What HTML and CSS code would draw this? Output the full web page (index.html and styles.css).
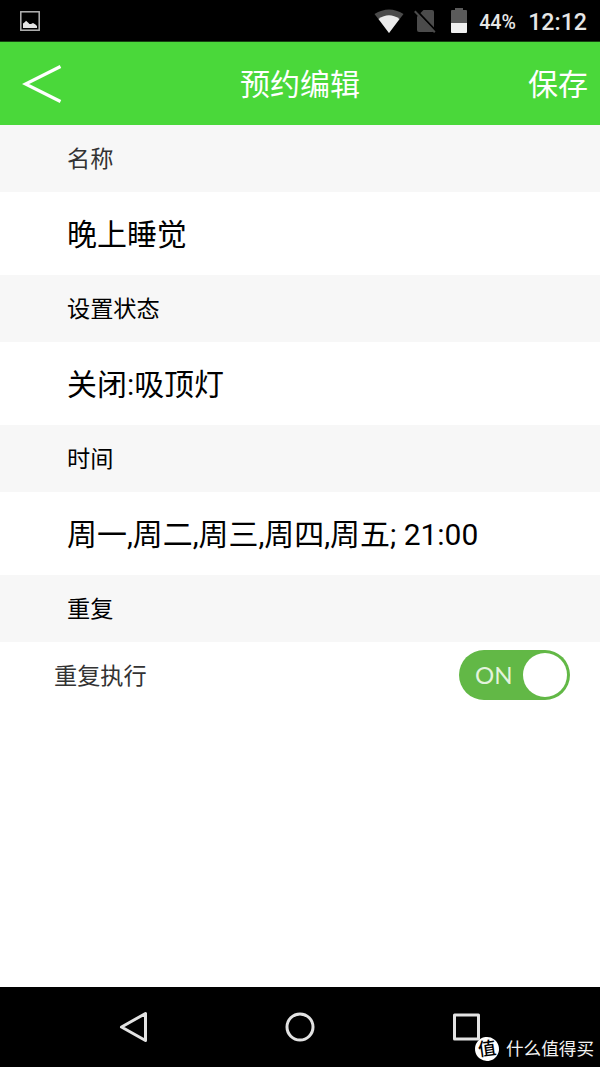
FILE: index.html
```html
<!DOCTYPE html>
<html lang="zh-CN">
<head>
    <meta charset="UTF-8">
    <meta name="viewport" content="width=device-width, initial-scale=1.0">
    <title>预约编辑</title>
    <link rel="stylesheet" href="styles.css">
</head>
<body>
    <div class="screen">
        <div class="status-bar">
            <svg class="icon-picture" width="20" height="20" viewBox="0 0 20 20">
                <rect x="0.8" y="0.8" width="18.4" height="18.4" fill="none" stroke="#b4b4b4" stroke-width="1.5"/>
                <path d="M3 17v-4.500l2-1.500 1-1.200 2 1.700 1.500 1.500h1.500l2-1 2.500 1.500 1.500 1.500v2z" fill="#e4e4e4"/>
            </svg>
            <div class="status-icons">
                <svg class="icon-wifi" width="30" height="24" viewBox="0 0 30 24">
                    <path d="M0.500 5Q15-4 29.500 5L15 24z" fill="#4b4b4b"/>
                    <path d="M4.500 10Q15 2.500 25.500 10L15 24z" fill="#ebebeb"/>
                </svg>
                <svg class="icon-sim" width="22" height="24" viewBox="0 0 22 24">
                    <path d="M3 7.500L9.500 1H18q2 0 2 2v18.500q0 1.500-2 1.500H5q-2 0-2-2z" fill="#4b4b4b"/>
                    <path d="M2 1L22 22" stroke="#000" stroke-width="2"/>
                    <path d="M0.800 2.200L20.800 23.200" stroke="#4b4b4b" stroke-width="2"/>
                </svg>
                <svg class="icon-battery" width="16" height="25" viewBox="0 0 16 25">
                    <path d="M0 3q0-1 1-1h3V0h8v2h3q1 0 1 1v12H0z" fill="#5b5b5b"/>
                    <path d="M0 15h16v9q0 1-1 1H1q-1 0-1-1z" fill="#efefef"/>
                </svg>
                <span class="battery-level">44%</span>
                <span class="clock">12:12</span>
            </div>
        </div>

        <div class="header">
            <svg class="back" width="40" height="40" viewBox="0 0 40 40">
                <path d="M38.500 2.500L3.500 20L38.500 37.500" fill="none" stroke="#fff" stroke-width="3.200"/>
            </svg>
            <h1>预约编辑</h1>
            <span class="save">保存</span>
        </div>

        <div class="content">
            <div class="label label-soft">名称</div>
            <div class="value">晚上睡觉</div>
            <div class="label">设置状态</div>
            <div class="value">关闭:吸顶灯</div>
            <div class="label">时间</div>
            <div class="value">周一,周二,周三,周四,周五; 21:00</div>
            <div class="label">重复</div>
            <div class="switch-row">
                <span class="switch-label">重复执行</span>
                <div class="switch">
                    <span class="switch-text">ON</span>
                    <span class="switch-knob"></span>
                </div>
            </div>
        </div>

        <div class="nav-bar">
            <svg width="32" height="32" viewBox="0 0 32 32">
                <path d="M28.500 2.500V29.500L4.500 16z" class="nav-shape"/>
            </svg>
            <svg width="32" height="32" viewBox="0 0 32 32">
                <circle cx="16" cy="16" r="13" class="nav-shape"/>
            </svg>
            <svg width="32" height="32" viewBox="0 0 32 32">
                <rect x="3.500" y="4" width="24" height="24" class="nav-shape"/>
            </svg>
            <div class="watermark">
                <span class="watermark-logo">值</span>
                <span class="watermark-text">什么值得买</span>
            </div>
        </div>
    </div>
</body>
</html>
```
FILE: styles.css
```css
* {
    box-sizing: border-box;
}
body {
    margin: 0;
    background: #fff;
    color: #000;
    font-family: Roboto, "Noto Sans CJK SC", sans-serif;
}
svg {
    display: block;
    flex: none;
}
.screen {
    display: flex;
    flex-direction: column;
    width: 600px;
    height: 1067px;
    overflow: hidden;
}
.status-bar {
    display: flex;
    justify-content: space-between;
    height: 42px;
    padding: 0 13px 0 20px;
    background: #000;
    border-bottom: 1px solid #174312;
}
.icon-picture {
    margin-top: 11px;
}
.status-icons {
    display: flex;
    align-items: flex-start;
    color: #e6e6e6;
    font-weight: 500;
    white-space: nowrap;
}
.icon-wifi {
    margin: 9px 10px 0 0;
}
.icon-sim {
    margin: 9px 15px 0 0;
}
.icon-battery {
    margin: 8px 12px 0 0;
}
.battery-level {
    width: 49px;
    margin-top: 11px;
    font-size: 19.6px;
    line-height: 24px;
}
.clock {
    margin-top: 8px;
    font-size: 23.2px;
    line-height: 28px;
}
.header {
    display: grid;
    grid-template-columns: 1fr auto 1fr;
    align-items: center;
    height: 83px;
    padding: 2px 12px 0;
    background: #4ad83a;
    color: #fff;
}
.header h1,
.save {
    margin: 0;
    font-size: 30px;
    font-weight: 400;
    line-height: 40px;
}
.back {
    margin: -2px 0 0 10px;
}
.save {
    justify-self: end;
}
.content {
    flex: 1;
}
.label {
    height: 67px;
    padding-left: 67px;
    background: #f7f7f7;
    font-size: 23.2px;
    line-height: 69px;
}
.label-soft,
.switch-label {
    color: #333;
}
.value {
    height: 83px;
    padding-left: 67px;
    font-size: 29.95px;
    line-height: 85px;
}
.switch-row {
    display: flex;
    align-items: center;
    justify-content: space-between;
    height: 66px;
    padding: 0 30px 0 54px;
}
.switch-label {
    padding-bottom: 3px;
    font-size: 23.2px;
}
.switch {
    display: flex;
    align-items: center;
    justify-content: space-between;
    width: 111px;
    height: 50px;
    padding: 0 3px 0 16px;
    border-radius: 25px;
    background: #62b846;
}
.switch-text {
    padding-bottom: 2px;
    color: #e3f3dd;
    font-family: Lato, sans-serif;
    font-size: 24px;
}
.switch-knob {
    width: 44px;
    height: 44px;
    border-radius: 50%;
    background: #fff;
}
.nav-bar {
    position: relative;
    display: flex;
    align-items: center;
    justify-content: space-between;
    height: 80px;
    padding: 0 117px;
    background: #000;
}
.nav-shape {
    fill: none;
    stroke: #e2e2e2;
    stroke-width: 3;
    stroke-linejoin: round;
}
.watermark {
    position: absolute;
    right: 6px;
    bottom: 6px;
    display: flex;
    align-items: center;
    gap: 7px;
    color: #f2f2f2;
    font-size: 17.6px;
    line-height: 24px;
}
.watermark-logo {
    width: 24px;
    height: 24px;
    border-radius: 50%;
    background: #fff;
    color: #000;
    font-size: 18px;
    font-weight: 500;
    text-align: center;
    transform: rotate(-8deg);
}
.watermark-text {
    padding-top: 1px;
}
```
